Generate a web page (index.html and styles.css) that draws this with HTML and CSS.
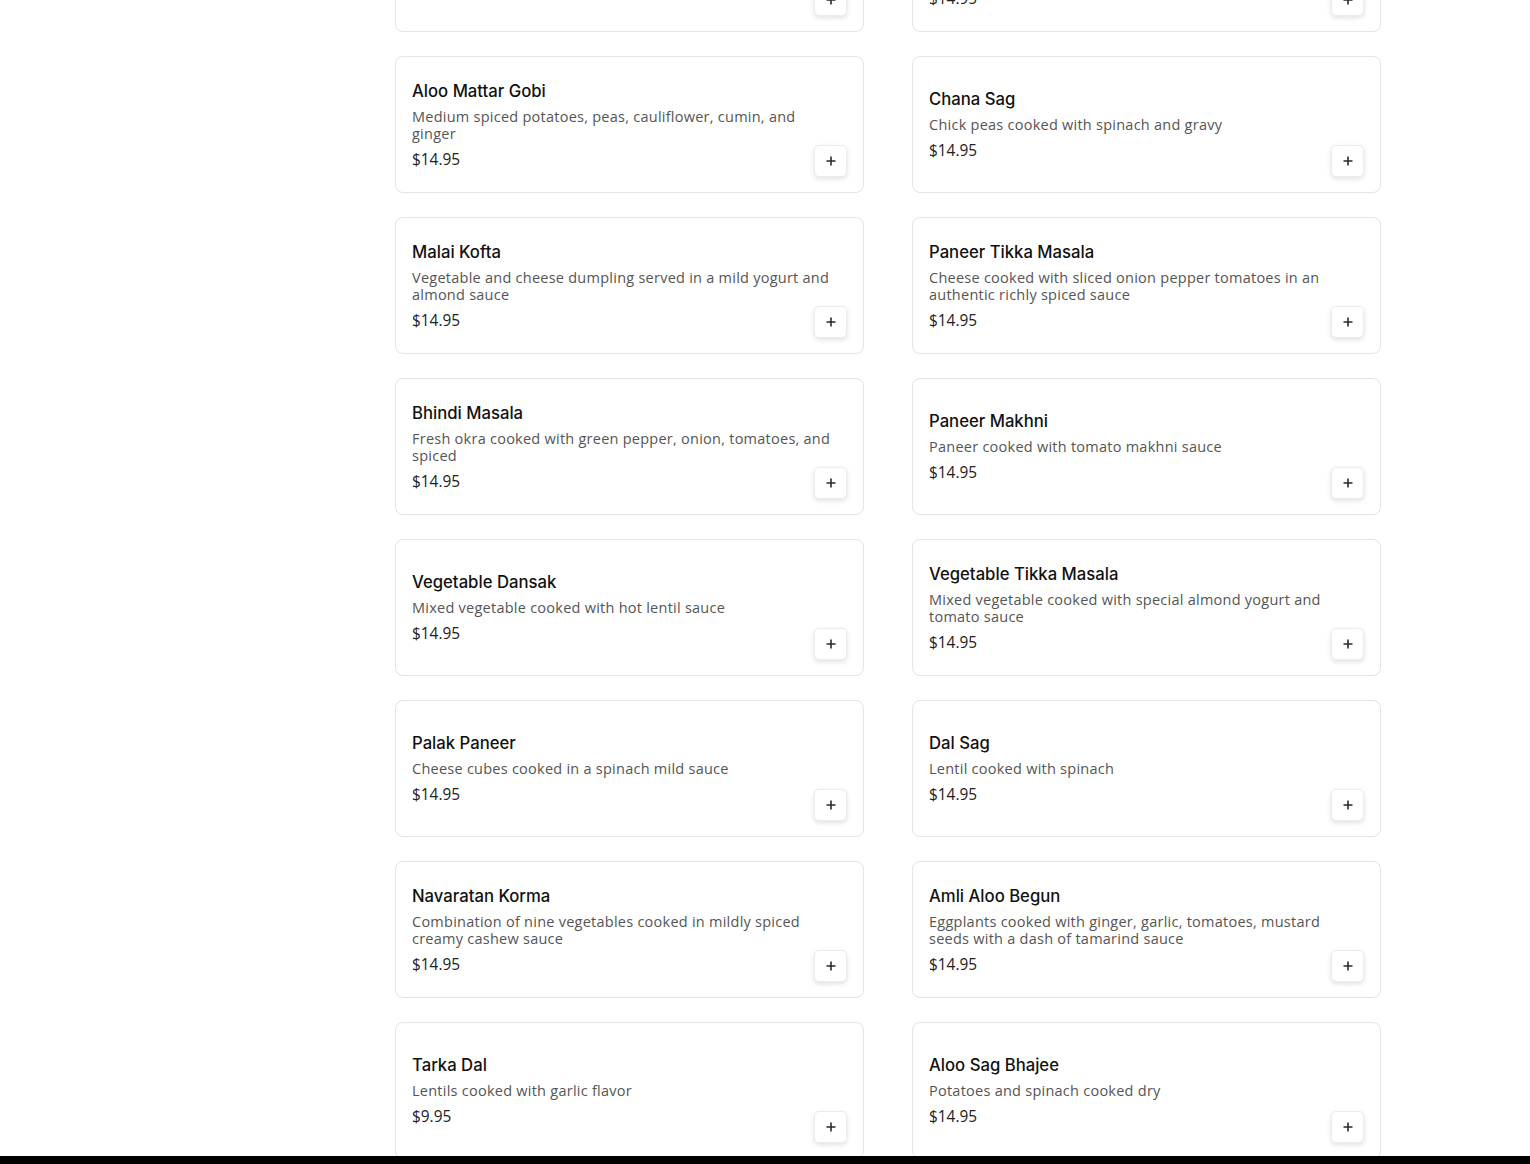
FILE: index.html
```html
<!DOCTYPE html>
<html lang="en">
<head>
<meta charset="utf-8">
<title>Menu</title>
<link rel="stylesheet" href="styles.css">
</head>
<body>
<div class="page">
  <aside class="side"></aside>
  <main class="menu">
    <div class="grid">
      <div class="card"><div class="info"><div class="name">Aloo Gobi</div><div class="desc">Potatoes and cauliflower cooked with spices</div><div class="price">$14.95</div></div><button class="add" aria-label="Add"><svg viewBox="0 0 10 10" width="10" height="10"><path d="M5 0.5v9M0.5 5h9"/></svg></button></div>
      <div class="card"><div class="info"><div class="name">Baingan Bharta</div><div class="desc">Roasted eggplant mashed and cooked with onion, tomatoes and fresh herbs</div><div class="price">$14.95</div></div><button class="add" aria-label="Add"><svg viewBox="0 0 10 10" width="10" height="10"><path d="M5 0.5v9M0.5 5h9"/></svg></button></div>

      <div class="card"><div class="info"><div class="name">Aloo Mattar Gobi</div><div class="desc">Medium spiced potatoes, peas, cauliflower, cumin, and ginger</div><div class="price">$14.95</div></div><button class="add" aria-label="Add"><svg viewBox="0 0 10 10" width="10" height="10"><path d="M5 0.5v9M0.5 5h9"/></svg></button></div>
      <div class="card"><div class="info"><div class="name">Chana Sag</div><div class="desc">Chick peas cooked with spinach and gravy</div><div class="price">$14.95</div></div><button class="add" aria-label="Add"><svg viewBox="0 0 10 10" width="10" height="10"><path d="M5 0.5v9M0.5 5h9"/></svg></button></div>

      <div class="card"><div class="info"><div class="name">Malai Kofta</div><div class="desc">Vegetable and cheese dumpling served in a mild yogurt and almond sauce</div><div class="price">$14.95</div></div><button class="add" aria-label="Add"><svg viewBox="0 0 10 10" width="10" height="10"><path d="M5 0.5v9M0.5 5h9"/></svg></button></div>
      <div class="card"><div class="info"><div class="name">Paneer Tikka Masala</div><div class="desc">Cheese cooked with sliced onion pepper tomatoes in an authentic richly spiced sauce</div><div class="price">$14.95</div></div><button class="add" aria-label="Add"><svg viewBox="0 0 10 10" width="10" height="10"><path d="M5 0.5v9M0.5 5h9"/></svg></button></div>

      <div class="card"><div class="info"><div class="name">Bhindi Masala</div><div class="desc">Fresh okra cooked with green pepper, onion, tomatoes, and spiced</div><div class="price">$14.95</div></div><button class="add" aria-label="Add"><svg viewBox="0 0 10 10" width="10" height="10"><path d="M5 0.5v9M0.5 5h9"/></svg></button></div>
      <div class="card"><div class="info"><div class="name">Paneer Makhni</div><div class="desc">Paneer cooked with tomato makhni sauce</div><div class="price">$14.95</div></div><button class="add" aria-label="Add"><svg viewBox="0 0 10 10" width="10" height="10"><path d="M5 0.5v9M0.5 5h9"/></svg></button></div>

      <div class="card"><div class="info"><div class="name">Vegetable Dansak</div><div class="desc">Mixed vegetable cooked with hot lentil sauce</div><div class="price">$14.95</div></div><button class="add" aria-label="Add"><svg viewBox="0 0 10 10" width="10" height="10"><path d="M5 0.5v9M0.5 5h9"/></svg></button></div>
      <div class="card"><div class="info"><div class="name">Vegetable Tikka Masala</div><div class="desc">Mixed vegetable cooked with special almond yogurt and tomato sauce</div><div class="price">$14.95</div></div><button class="add" aria-label="Add"><svg viewBox="0 0 10 10" width="10" height="10"><path d="M5 0.5v9M0.5 5h9"/></svg></button></div>

      <div class="card"><div class="info"><div class="name">Palak Paneer</div><div class="desc">Cheese cubes cooked in a spinach mild sauce</div><div class="price">$14.95</div></div><button class="add" aria-label="Add"><svg viewBox="0 0 10 10" width="10" height="10"><path d="M5 0.5v9M0.5 5h9"/></svg></button></div>
      <div class="card"><div class="info"><div class="name">Dal Sag</div><div class="desc">Lentil cooked with spinach</div><div class="price">$14.95</div></div><button class="add" aria-label="Add"><svg viewBox="0 0 10 10" width="10" height="10"><path d="M5 0.5v9M0.5 5h9"/></svg></button></div>

      <div class="card"><div class="info"><div class="name">Navaratan Korma</div><div class="desc">Combination of nine vegetables cooked in mildly spiced creamy cashew sauce</div><div class="price">$14.95</div></div><button class="add" aria-label="Add"><svg viewBox="0 0 10 10" width="10" height="10"><path d="M5 0.5v9M0.5 5h9"/></svg></button></div>
      <div class="card"><div class="info"><div class="name">Amli Aloo Begun</div><div class="desc">Eggplants cooked with ginger, garlic, tomatoes, mustard seeds with a dash of tamarind sauce</div><div class="price">$14.95</div></div><button class="add" aria-label="Add"><svg viewBox="0 0 10 10" width="10" height="10"><path d="M5 0.5v9M0.5 5h9"/></svg></button></div>

      <div class="card"><div class="info"><div class="name">Tarka Dal</div><div class="desc">Lentils cooked with garlic flavor</div><div class="price">$9.95</div></div><button class="add" aria-label="Add"><svg viewBox="0 0 10 10" width="10" height="10"><path d="M5 0.5v9M0.5 5h9"/></svg></button></div>
      <div class="card"><div class="info"><div class="name">Aloo Sag Bhajee</div><div class="desc">Potatoes and spinach cooked dry</div><div class="price">$14.95</div></div><button class="add" aria-label="Add"><svg viewBox="0 0 10 10" width="10" height="10"><path d="M5 0.5v9M0.5 5h9"/></svg></button></div>
    </div>
  </main>
</div>
<div class="bottom-bar"></div>
</body>
</html>
```
FILE: styles.css
```css
html, body {
  margin: 0;
  padding: 0;
  background: #fff;
  height: 1164px;
  overflow: hidden;
}
body {
  font-family: "Open Sans", "Liberation Sans", sans-serif;
  color: #1a1a1a;
}
.page {
  display: flex;
}
.side {
  width: 395px;
  flex: none;
}
.menu {
  width: 986px;
  flex: none;
}
.grid {
  display: grid;
  grid-template-columns: 469px 469px;
  column-gap: 48px;
  row-gap: 24px;
  margin-top: -105px;
}
.card {
  box-sizing: border-box;
  height: 137px;
  border: 1px solid #e4e4e4;
  border-radius: 8px;
  padding: 16px;
  display: grid;
  grid-template-columns: 1fr;
  grid-template-rows: 1fr;
  background: #fff;
}
.info {
  grid-area: 1 / 1;
  align-self: center;
  min-width: 0;
  padding-right: 11px;
}
.name {
  font-family: "Inter", "Open Sans", sans-serif;
  font-size: 16.7px;
  font-weight: 500;
  line-height: 20px;
  color: #111;
}
.desc {
  margin-top: 7px;
  font-size: 14.5px;
  letter-spacing: 0.25px;
  line-height: 17px;
  color: #555;
}
.price {
  margin-top: 8px;
  font-size: 15.4px;
  line-height: 19px;
  color: #222;
}
.add {
  grid-area: 1 / 1;
  align-self: end;
  justify-self: end;
  width: 33px;
  height: 32px;
  margin: 0 0 -1px 0;
  border: 1px solid #ececec;
  border-radius: 5px;
  background: #fff;
  box-shadow: 0 2px 5px rgba(0, 0, 0, 0.12);
  padding: 0;
  display: flex;
  align-items: center;
  justify-content: center;
  cursor: pointer;
}
.add svg {
  display: block;
  fill: none;
  stroke: #2a2a2a;
  stroke-width: 1.6;
}
.bottom-bar {
  position: fixed;
  left: 0;
  right: 0;
  bottom: 0;
  height: 8px;
  background: #000;
}
```
